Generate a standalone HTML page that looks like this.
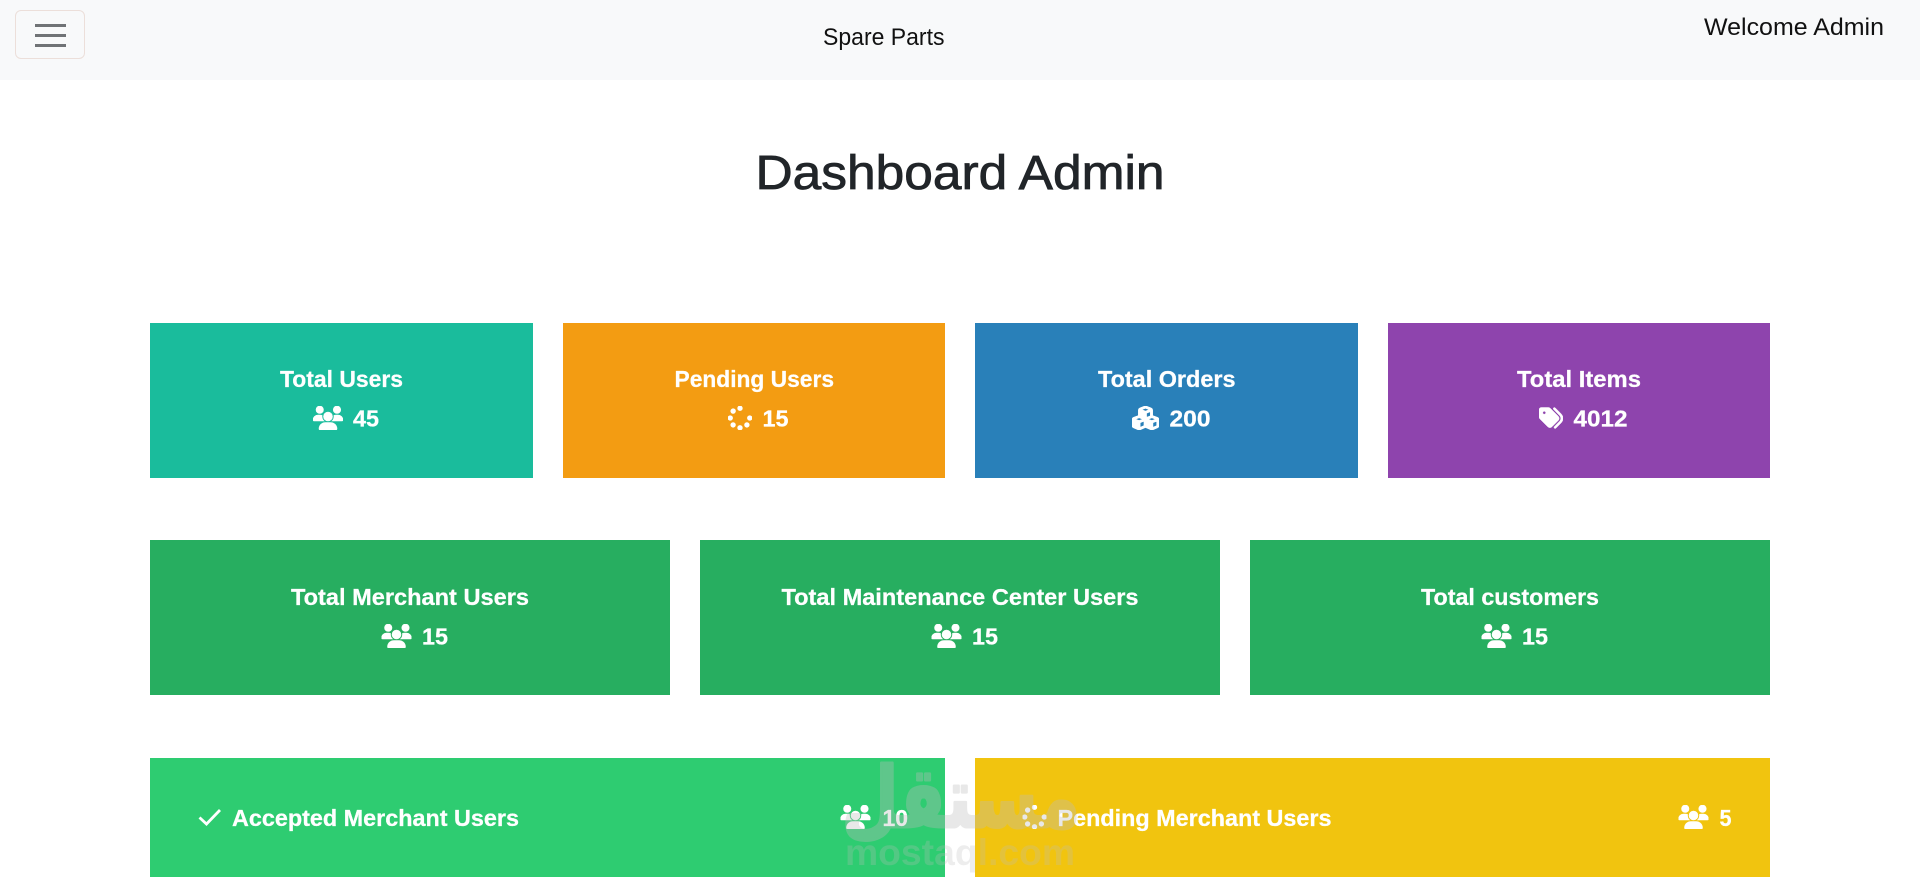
<!DOCTYPE html>
<html lang="en">
<head>
<meta charset="utf-8">
<title>Dashboard Admin</title>
<style>
html,body{margin:0;padding:0;background:#fff;width:1920px;height:891px;overflow:hidden}
body{position:relative;font-family:"Liberation Sans","Noto Sans CJK SC",sans-serif}
nav{position:absolute;left:0;top:0;width:1920px;height:80px;background:#f8f9fa}
.toggler{position:absolute;left:15px;top:10px;width:68px;height:47px;border:1px solid #ecdfda;border-radius:6px;box-sizing:content-box}
.toggler i{position:absolute;left:19px;width:31px;height:2.6px;background:#707376}
.card{position:absolute}
svg.o{position:absolute;left:0;top:0}
text{font-family:"Liberation Sans","Noto Sans CJK SC",sans-serif}
.t{font-size:23px;font-weight:700;fill:#fff;stroke:#fff;stroke-width:.25px}
</style>
</head>
<body>
<nav>
  <div class="toggler"><i style="top:13px"></i><i style="top:23px"></i><i style="top:33px"></i></div>
</nav>
<div class="card" style="left:150px;top:323px;width:382.5px;height:155px;background:#1abc9c"></div>
<div class="card" style="left:562.5px;top:323px;width:382.5px;height:155px;background:#f39c12"></div>
<div class="card" style="left:975px;top:323px;width:382.5px;height:155px;background:#2980b9"></div>
<div class="card" style="left:1387.5px;top:323px;width:382.5px;height:155px;background:#8e44ad"></div>
<div class="card" style="left:150px;top:540px;width:520px;height:155px;background:#27ae60"></div>
<div class="card" style="left:700px;top:540px;width:520px;height:155px;background:#27ae60"></div>
<div class="card" style="left:1250px;top:540px;width:520px;height:155px;background:#27ae60"></div>
<div class="card" style="left:150px;top:758px;width:795px;height:119px;background:#2ecc71"></div>
<div class="card" style="left:975px;top:758px;width:795px;height:119px;background:#f1c40f"></div>

<svg class="o" width="1920" height="891" viewBox="0 0 1920 891" xmlns="http://www.w3.org/2000/svg">
<defs>
<symbol id="users" viewBox="0 0 640 512"><path fill="#fff" stroke="#fff" stroke-width="12" d="M144 0a80 80 0 1 1 0 160A80 80 0 1 1 144 0zM512 0a80 80 0 1 1 0 160A80 80 0 1 1 512 0zM0 298.7C0 239.8 47.8 192 106.7 192h42.7c15.9 0 31 3.5 44.6 9.7c-1.3 7.2-1.9 14.7-1.9 22.3c0 38.2 16.8 72.5 43.3 96c-.2 0-.4 0-.7 0H21.3C9.6 320 0 310.4 0 298.7zM405.3 320c-.2 0-.4 0-.7 0c26.6-23.5 43.3-57.8 43.3-96c0-7.6-.7-15-1.9-22.3c13.6-6.3 28.7-9.7 44.6-9.7h42.7C592.2 192 640 239.8 640 298.7c0 11.8-9.6 21.3-21.3 21.3H405.3zM224 224a96 96 0 1 1 192 0 96 96 0 1 1 -192 0zM128 485.3C128 411.7 187.7 352 261.3 352H378.7C452.3 352 512 411.7 512 485.3c0 14.7-11.9 26.7-26.7 26.7H154.7c-14.7 0-26.7-11.9-26.7-26.7z"/></symbol>
<symbol id="spin" viewBox="0 0 512 512"><path fill="#fff" stroke="#fff" stroke-width="18" d="M304 48a48 48 0 1 0 -96 0 48 48 0 1 0 96 0zm0 416a48 48 0 1 0 -96 0 48 48 0 1 0 96 0zM48 304a48 48 0 1 0 0-96 48 48 0 1 0 0 96zm464-48a48 48 0 1 0 -96 0 48 48 0 1 0 96 0zM142.9 437A48 48 0 1 0 75 369.1 48 48 0 1 0 142.9 437zm0-294.2A48 48 0 1 0 75 75a48 48 0 1 0 67.9 67.9zM369.1 437A48 48 0 1 0 437 369.1 48 48 0 1 0 369.1 437z"/></symbol>
<symbol id="cubes" viewBox="0 0 576 512"><path fill="#fff" stroke="#fff" stroke-width="14" d="M290.8 48.6l78.4 29.7L288 109.5 206.8 78.3l78.4-29.7c1.8-.7 3.8-.7 5.7 0zM136 92.5V204.7c-1.3 .4-2.6 .8-3.9 1.3l-96 36.4C14.4 250.6 0 271.5 0 294.7V413.9c0 22.2 13.1 42.3 33.5 51.3l96 42.2c14.4 6.3 30.7 6.3 45.1 0L288 457.5l113.5 49.9c14.4 6.3 30.7 6.3 45.1 0l96-42.2c20.3-8.9 33.5-29.1 33.5-51.3V294.7c0-23.3-14.4-44.1-36.1-52.4l-96-36.4c-1.3-.5-2.6-.9-3.9-1.3V92.5c0-23.3-14.4-44.1-36.1-52.4l-96-36.4c-12.8-4.8-26.9-4.8-39.7 0l-96 36.4C150.4 48.4 136 69.3 136 92.5zM392 210.6l-82.4 31.2V152.6L392 121v89.6zM154.8 250.9l78.4 29.7L152 311.7 70.8 280.6l78.4-29.7c1.8-.7 3.8-.7 5.7 0zm18.8 204.4V354.8L256 323.2v95.9l-82.4 36.2zM421.2 250.9c1.8-.7 3.8-.7 5.7 0l78.4 29.7L424 311.7l-81.2-31.1 78.4-29.7zM523.2 421.2l-77.6 34.1V354.8L528 323.2v90.7c0 3.2-1.9 6-4.8 7.3z"/></symbol>
<symbol id="tags" viewBox="0 0 512 512"><path fill="#fff" stroke="#fff" stroke-width="10" d="M345 39.1L472.8 168.4c52.4 53 52.4 138.2 0 191.2L360.8 472.9c-9.3 9.4-24.5 9.5-33.9 .2s-9.5-24.5-.2-33.9L438.6 325.9c33.9-34.3 33.9-89.4 0-123.7L310.9 72.9c-9.3-9.4-9.2-24.6 .2-33.9s24.6-9.2 33.9 .2zM0 229.5V80C0 53.5 21.5 32 48 32H197.5c17 0 33.3 6.7 45.3 18.7l168 168c25 25 25 65.5 0 90.5L277.3 442.7c-25 25-65.5 25-90.5 0l-168-168C6.7 262.7 0 246.5 0 229.5zM144 144a32 32 0 1 0 -64 0 32 32 0 1 0 64 0z"/></symbol>
</defs>

<!-- navbar text -->
<text x="823" y="45" font-size="24" fill="#111" textLength="121.5" lengthAdjust="spacingAndGlyphs">Spare Parts</text>
<text x="1704" y="35" font-size="24.5" fill="#111" textLength="180" lengthAdjust="spacingAndGlyphs">Welcome Admin</text>

<!-- heading -->
<text x="755.5" y="189" font-size="48" fill="#212529" stroke="#212529" stroke-width=".8" textLength="409" lengthAdjust="spacingAndGlyphs">Dashboard Admin</text>

<!-- row 1 -->
<text class="t" x="280" y="387" textLength="123" lengthAdjust="spacingAndGlyphs">Total Users</text>
<use href="#users" x="313" y="406" width="30" height="24"/>
<text class="t" x="353" y="426.5" textLength="26" lengthAdjust="spacingAndGlyphs">45</text>

<text class="t" x="674.5" y="387" textLength="159.5" lengthAdjust="spacingAndGlyphs">Pending Users</text>
<use href="#spin" x="728" y="406" width="24" height="24"/>
<text class="t" x="762.5" y="426.5" textLength="26" lengthAdjust="spacingAndGlyphs">15</text>

<text class="t" x="1098" y="387" textLength="137.5" lengthAdjust="spacingAndGlyphs">Total Orders</text>
<use href="#cubes" x="1132" y="406" width="27" height="24"/>
<text class="t" x="1169.5" y="426.5" textLength="41" lengthAdjust="spacingAndGlyphs">200</text>

<text class="t" x="1517" y="387" textLength="124" lengthAdjust="spacingAndGlyphs">Total Items</text>
<use href="#tags" x="1539" y="406" width="24" height="24"/>
<text class="t" x="1573.5" y="426.5" textLength="54" lengthAdjust="spacingAndGlyphs">4012</text>

<!-- row 2 -->
<text class="t" x="291" y="605" textLength="238" lengthAdjust="spacingAndGlyphs">Total Merchant Users</text>
<use href="#users" x="381.5" y="624" width="30" height="24"/>
<text class="t" x="422" y="644.5" textLength="26" lengthAdjust="spacingAndGlyphs">15</text>

<text class="t" x="781.5" y="605" textLength="357" lengthAdjust="spacingAndGlyphs">Total Maintenance Center Users</text>
<use href="#users" x="931.5" y="624" width="30" height="24"/>
<text class="t" x="972" y="644.5" textLength="26" lengthAdjust="spacingAndGlyphs">15</text>

<text class="t" x="1421" y="605" textLength="178" lengthAdjust="spacingAndGlyphs">Total customers</text>
<use href="#users" x="1481.5" y="624" width="30" height="24"/>
<text class="t" x="1522" y="644.5" textLength="26" lengthAdjust="spacingAndGlyphs">15</text>

<!-- row 3 -->
<polyline points="199.5,817.5 206.5,824 220,810" fill="none" stroke="#fff" stroke-width="2.8"/>
<text class="t" x="232" y="826" textLength="287" lengthAdjust="spacingAndGlyphs">Accepted Merchant Users</text>
<use href="#users" x="840.5" y="805" width="30" height="24"/>
<text class="t" x="882.5" y="826" textLength="25.5" lengthAdjust="spacingAndGlyphs">10</text>

<use href="#spin" x="1022.5" y="805" width="24" height="24"/>
<text class="t" x="1057.5" y="826" textLength="274" lengthAdjust="spacingAndGlyphs">Pending Merchant Users</text>
<use href="#users" x="1678.5" y="805" width="30" height="24"/>
<text x="1719.5" y="826" class="t" textLength="12" lengthAdjust="spacingAndGlyphs">5</text>

<!-- watermark -->
<g transform="translate(-33.5 0) scale(1.036 1)">
  <text x="845" y="827" font-size="84" font-weight="700" fill="#bdbdbd" stroke="#bdbdbd" stroke-width="3" stroke-linejoin="round" opacity=".34" style="font-family:'DejaVu Sans',sans-serif" direction="rtl" textLength="230" lengthAdjust="spacingAndGlyphs" text-anchor="end">مستقل</text>
</g>
<text x="845" y="865" font-size="37" font-weight="700" fill="#bdbdbd" opacity=".26" textLength="230" lengthAdjust="spacingAndGlyphs">mostaql.com</text>
</svg>
</body>
</html>
